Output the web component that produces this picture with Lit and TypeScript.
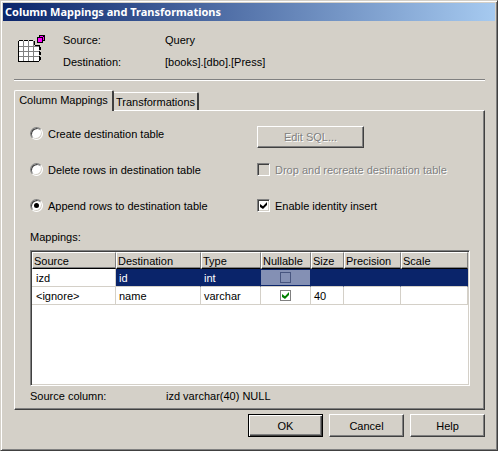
import { LitElement, html, css, svg } from "lit";
import { customElement, state } from "lit/decorators.js";

interface Mapping {
  source: string;
  destination: string;
  type: string;
  nullable: boolean;
  size: string;
}

const MODES = [
  { id: "create", label: "Create destination table" },
  { id: "delete", label: "Delete rows in destination table" },
  { id: "append", label: "Append rows to destination table" },
];

const MAPPINGS: Mapping[] = [
  { source: "izd", destination: "id", type: "int", nullable: false, size: "" },
  { source: "<ignore>", destination: "name", type: "varchar", nullable: true, size: "40" },
];

const COLUMNS = ["Source", "Destination", "Type", "Nullable", "Size", "Precision", "Scale"];

const gridIcon = html`<svg class="icon" viewBox="0 0 28 28" shape-rendering="crispEdges" aria-hidden="true">
  ${svg`
    <path fill="#fff" d="M1 6h15v5h5v16H1z"/>
    <path fill="#808080" d="M5 6h1v20h-1zM10 6h1v20h-1zM15 6h1v20h-1zM1 11h20v1H1zM1 16h20v1H1zM1 21h20v1H1z"/>
    <path fill="#000" d="M0 6h1v21H0zM1 5h1v1H1zM2 5h3v1H2zM6 5h4v1H6zM11 5h4v1h-4zM16 6h1v4h-1zM17 10h5v1h-5zM21 11h1v4h-1zM22 12h1v3h-1zM21 16h1v4h-1zM22 17h1v3h-1zM21 21h1v5h-1zM22 22h1v3h-1zM1 26h20v1H1z"/>
    <path fill="#000" d="M19 2h2V0h6v6h-2v2h-6z"/>
    <path fill="#f0f" d="M20 3h4v4h-4zM22 1h3v1h-3zM25 2h1v3h-1z"/>`}
</svg>`;

@customElement("app-root")
export class AppRoot extends LitElement {
  @state() private mode = "append";
  @state() private identity = true;

  static styles = css`
    :host {
      display: block;
      font: 11px/14px "Liberation Sans", Arial, sans-serif;
      white-space: nowrap;
      color: #000;
      --face: #d4d0c8;
      --shadow: #808080;
      --dark: #404040;
      --navy: #0a246a;
    }
    * { box-sizing: border-box; }
    button, input { font: inherit; color: inherit; margin: 0; }
    .window {
      display: flex;
      flex-direction: column;
      min-height: 100vh;
      background: var(--face);
      border: 1px solid;
      border-color: var(--face) var(--dark) var(--dark) var(--face);
      box-shadow: inset 1px 1px #fff, inset -1px -1px var(--shadow);
      padding: 2px;
    }
    .title {
      margin: 0;
      height: 18px;
      padding: 0 2px;
      font: bold 11px/18px "Noto Sans", "Liberation Sans", Arial, sans-serif;
      color: #fff;
      background: linear-gradient(to right, var(--navy), #a6caf0);
    }
    .content {
      flex: 1;
      display: flex;
      flex-direction: column;
      padding: 12px 10px 11px 11px;
    }
    .summary {
      display: grid;
      grid-template-columns: 49px 102px 1fr;
      row-gap: 8px;
      height: 47px;
      border-bottom: 1px solid var(--shadow);
      box-shadow: 0 1px #fff;
      align-content: start;
    }
    .icon { width: 28px; height: 28px; margin: 2px 0 0 4px; grid-row: 1 / 3; }
    .tabs {
      display: flex;
      align-items: flex-end;
      margin-top: 10px;
      height: 20px;
    }
    .tab {
      width: 85px;
      height: 18px;
      padding: 0;
      background: var(--face);
      border: solid;
      border-width: 1px 2px 0 0;
      border-color: #fff var(--dark) #fff #fff;
      border-radius: 0 2px 0 0;
    }
    .tab.active {
      width: 100px;
      height: 21px;
      padding: 0 0 2px;
      border-left-width: 1px;
      border-radius: 2px 2px 0 0;
      margin-bottom: -1px;
      z-index: 1;
    }
    .panel {
      flex: 1;
      display: flex;
      flex-direction: column;
      border: 1px solid;
      border-color: #fff var(--dark) var(--dark) #fff;
      box-shadow: inset -1px -1px var(--shadow);
      padding: 15px 14px 6px 15px;
    }
    .options {
      display: grid;
      grid-template-columns: 227px 1fr;
      grid-auto-rows: 22px;
      row-gap: 14px;
    }
    .option { display: flex; align-items: flex-start; gap: 5px; padding-top: 1px; }
    .disabled { color: var(--shadow); text-shadow: 1px 1px #fff; }
    .radio, .check {
      appearance: none;
      flex: none;
      width: 13px;
      height: 13px;
      background: #fff;
      border: 1px solid;
      border-color: var(--shadow) #fff #fff var(--shadow);
      box-shadow: inset 1px 1px var(--dark), inset -1px -1px var(--face);
      display: grid;
      place-items: center;
    }
    .radio { border-radius: 50%; }
    .radio:checked::before {
      content: "";
      width: 5px;
      height: 5px;
      border-radius: 50%;
      background: #000;
    }
    .check:disabled { background: var(--face); }
    .check:checked::before, .cell-check:checked::before {
      content: "";
      width: 7px;
      height: 7px;
      background: #000;
      clip-path: polygon(0 29%, 43% 62%, 100% 0, 100% 43%, 43% 100%, 0 71%);
    }
    .cell-check {
      appearance: none;
      display: grid;
      place-items: center;
      width: 11px;
      height: 11px;
      margin: 0 auto;
      background: #fff;
      border: 1px solid var(--shadow);
    }
    .cell-check:checked::before { background: #008000; }
    .button {
      height: 23px;
      padding: 0;
      background: var(--face);
      border: 1px solid;
      border-color: #fff var(--dark) var(--dark) #fff;
      box-shadow: inset -1px -1px var(--shadow);
    }
    .edit { width: 107px; height: 22px; }
    .edit:disabled { color: var(--shadow); }
    .caption { margin: 10px 0 6px; }
    .list {
      flex: 1;
      border: 1px solid;
      border-color: var(--shadow) #fff #fff var(--shadow);
      box-shadow: inset 1px 1px var(--dark), inset -1px -1px var(--face);
      background: #fff;
      padding: 1px;
    }
    .table {
      width: 100%;
      table-layout: fixed;
      border-collapse: separate;
      border-spacing: 0;
    }
    .table th {
      height: 17px;
      padding: 0 0 0 1px;
      font-weight: normal;
      text-align: left;
      background: var(--face);
      border: 1px solid;
      border-color: #fff var(--shadow) #000 #fff;
      box-shadow: inset 0 -1px var(--shadow);
      line-height: 14px;
    }
    .table td {
      height: 18px;
      padding: 0 0 0 3px;
      border: solid var(--face);
      border-width: 0 1px 1px 0;
    }
    .table td:first-child { padding-left: 4px; }
    .table .flag { padding: 0; }
    .selected td:not(:first-child) {
      background: var(--navy);
      color: #fff;
      border-right-color: var(--navy);
    }
    .selected .flag:not(:first-child) {
      background: #8490b4;
      box-shadow: inset 0 1px var(--navy), inset 0 -1px var(--navy);
    }
    .selected .cell-check { background: transparent; border-color: #47557f; }
    .w-source { width: 84px; }
    .w-destination { width: 85px; }
    .w-type { width: 60px; }
    .w-nullable { width: 50px; }
    .w-size { width: 33px; }
    .w-precision { width: 57px; }
    .status { display: grid; grid-template-columns: 136px 1fr; margin-top: 3px; }
    .actions { display: flex; justify-content: flex-end; gap: 6px; margin-top: 4px; }
    .action { width: 75px; }
    .default {
      border-color: #000;
      box-shadow: inset 1px 1px #fff, inset -1px -1px var(--dark), inset -2px -2px var(--shadow);
    }
  `;

  private renderMode(index: number) {
    const m = MODES[index];
    return html`<label class="option">
      <input class="radio" type="radio" name="mode" .checked=${this.mode === m.id}
        @change=${() => (this.mode = m.id)}>${m.label}</label>`;
  }

  private renderRow(m: Mapping, index: number) {
    return html`<tr class=${index === 0 ? "selected" : ""}>
      <td>${m.source}</td><td>${m.destination}</td><td>${m.type}</td>
      <td class="flag"><input class="cell-check" type="checkbox" aria-label="Nullable"
        .checked=${m.nullable}></td>
      <td>${m.size}</td><td></td><td></td>
    </tr>`;
  }

  render() {
    return html`<main class="window">
      <h1 class="title">Column Mappings and Transformations</h1>
      <div class="content">
        <header class="summary">
          ${gridIcon}
          <span>Source:</span><span>Query</span>
          <span>Destination:</span><span>[books].[dbo].[Press]</span>
        </header>
        <div class="tabs" role="tablist">
          <button class="tab active" role="tab" aria-selected="true">Column Mappings</button>
          <button class="tab" role="tab" aria-selected="false">Transformations</button>
        </div>
        <section class="panel" role="tabpanel">
          <div class="options">
            ${this.renderMode(0)}
            <button class="button edit disabled" disabled>Edit SQL...</button>
            ${this.renderMode(1)}
            <label class="option disabled"><input class="check" type="checkbox" disabled>Drop and recreate destination table</label>
            ${this.renderMode(2)}
            <label class="option"><input class="check" type="checkbox" .checked=${this.identity}
              @change=${() => (this.identity = !this.identity)}>Enable identity insert</label>
          </div>
          <p class="caption" id="mappings">Mappings:</p>
          <div class="list">
            <table class="table" aria-labelledby="mappings">
              <thead><tr>${COLUMNS.map((c) => html`<th class="w-${c.toLowerCase()}" scope="col">${c}</th>`)}</tr></thead>
              <tbody>${MAPPINGS.map((m, i) => this.renderRow(m, i))}</tbody>
            </table>
          </div>
          <div class="status"><span>Source column:</span><span>izd varchar(40) NULL</span></div>
        </section>
        <footer class="actions">
          <button class="button action default">OK</button>
          <button class="button action">Cancel</button>
          <button class="button action">Help</button>
        </footer>
      </div>
    </main>`;
  }
}
